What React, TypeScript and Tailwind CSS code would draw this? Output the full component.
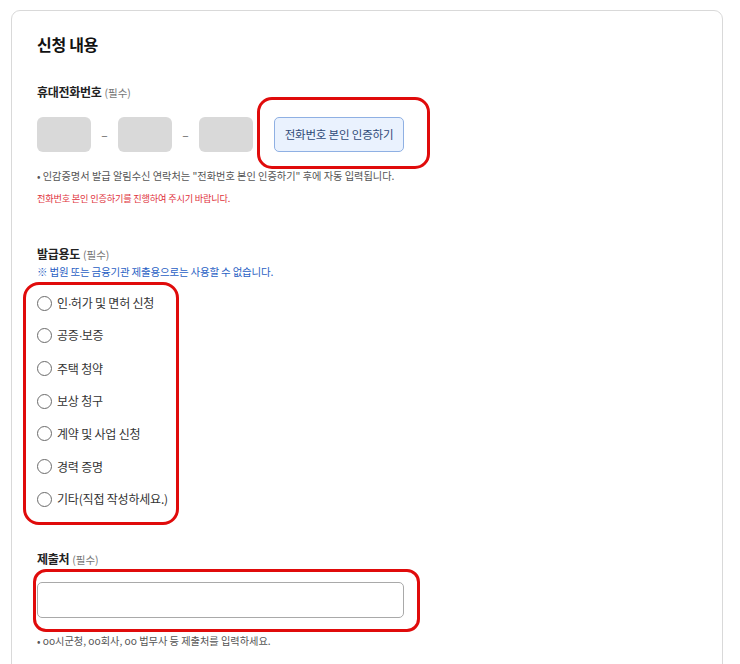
import React from "react";

const font = { fontFamily: '"Noto Sans CJK KR", "Noto Sans", sans-serif' };

function Label({ text }: { text: string }) {
  return (
    <div className="flex items-baseline h-[18px] leading-[18px]">
      <span className="text-[12px] font-bold text-[#222] tracking-[-0.3px]">{text}</span>
      <span className="text-[10.5px] text-[#777] ml-[3px]">(필수)</span>
    </div>
  );
}

function Dot() {
  return <span className="font-['Liberation_Sans'] tracking-[-1px]">·</span>;
}

const options: React.ReactNode[] = [
  <>인<Dot />허가 및 면허 신청</>,
  <>공증<Dot />보증</>,
  "주택 청약",
  "보상 청구",
  "계약 및 사업 신청",
  "경력 증명",
  "기타(직접 작성하세요.)",
];

export default function App() {
  return (
    <div className="h-[664px] bg-white pt-[10px] pl-[11px] pr-[17px] overflow-hidden" style={font}>
      <div className="border border-[#d9d9d9] rounded-[9px] pl-[25px] pt-[21px] h-[700px]">
        <div className="h-[24px] leading-[24px] text-[16px] font-bold text-[#111] tracking-[-0.3px]">신청 내용</div>

        <div className="mt-[27px]">
          <Label text="휴대전화번호" />
        </div>

        <div className="mt-[16px] flex items-center h-[35px]">
          <div className="w-[54px] h-[35px] rounded-[6px] bg-[#d9d9d9]" />
          <div className="w-[27px] text-center text-[12px] text-[#666]">–</div>
          <div className="w-[54px] h-[35px] rounded-[6px] bg-[#d9d9d9]" />
          <div className="w-[27px] text-center text-[12px] text-[#666]">–</div>
          <div className="w-[54px] h-[35px] rounded-[6px] bg-[#d9d9d9]" />
          <div className="relative ml-[21px]">
            <button className="w-[130px] h-[35px] rounded-[5px] border border-[#8fb0e3] bg-[#eaf2fe] text-[11.5px] text-[#2f4a78] tracking-[-0.2px]">
              전화번호 본인 인증하기
            </button>
            <div className="absolute -left-[17px] -right-[26px] -top-[20px] -bottom-[17px] border-[3px] border-[#e00b0b] rounded-[15px] pointer-events-none" />
          </div>
        </div>

        <div className="mt-[16px] h-[16px] leading-[16px] text-[10.2px] text-[#555]">
          • 인감증명서 발급 알림수신 연락처는 "전화번호 본인 인증하기" 후에 자동 입력됩니다.
        </div>
        <div className="mt-[6px] h-[16px] leading-[16px] text-[9.2px] text-[#e0323c] tracking-[-0.2px]">
          전화번호 본인 인증하기를 진행하여 주시기 바랍니다.
        </div>

        <div className="mt-[39px]">
          <Label text="발급용도" />
        </div>
        <div className="mt-[1px] h-[16px] leading-[16px] text-[10.5px] text-[#2a5fc4] tracking-[-0.2px]">
          ※ 법원 또는 금융기관 제출용으로는 사용할 수 없습니다.
        </div>

        <div className="relative mt-[7px] w-fit">
          {options.map((o, i) => (
            <label key={i} className="flex items-center h-[32.67px]">
              <span className="w-[15px] h-[15px] rounded-full border-[1.5px] border-[#6b6b6b] bg-white" />
              <span className="ml-[5px] text-[12px] text-[#333] tracking-[-0.2px]">{o}</span>
            </label>
          ))}
          <div className="absolute -left-[14px] w-[156px] -top-[5px] -bottom-[9px] border-[3px] border-[#e00b0b] rounded-[16px] pointer-events-none" />
        </div>

        <div className="mt-[34px]">
          <Label text="제출처" />
        </div>

        <div className="relative mt-[14px] w-[367px]">
          <input className="block w-[367px] h-[36px] rounded-[5px] border border-[#a9a9a9] bg-white outline-none" />
          <div className="absolute -left-[4px] -right-[16px] -top-[13px] -bottom-[14px] border-[3px] border-[#e00b0b] rounded-[13px] pointer-events-none" />
        </div>

        <div className="mt-[15px] h-[16px] leading-[16px] text-[10.2px] text-[#555]">
          • oo시군청, oo회사, oo 법무사 등 제출처를 입력하세요.
        </div>
      </div>
    </div>
  );
}
